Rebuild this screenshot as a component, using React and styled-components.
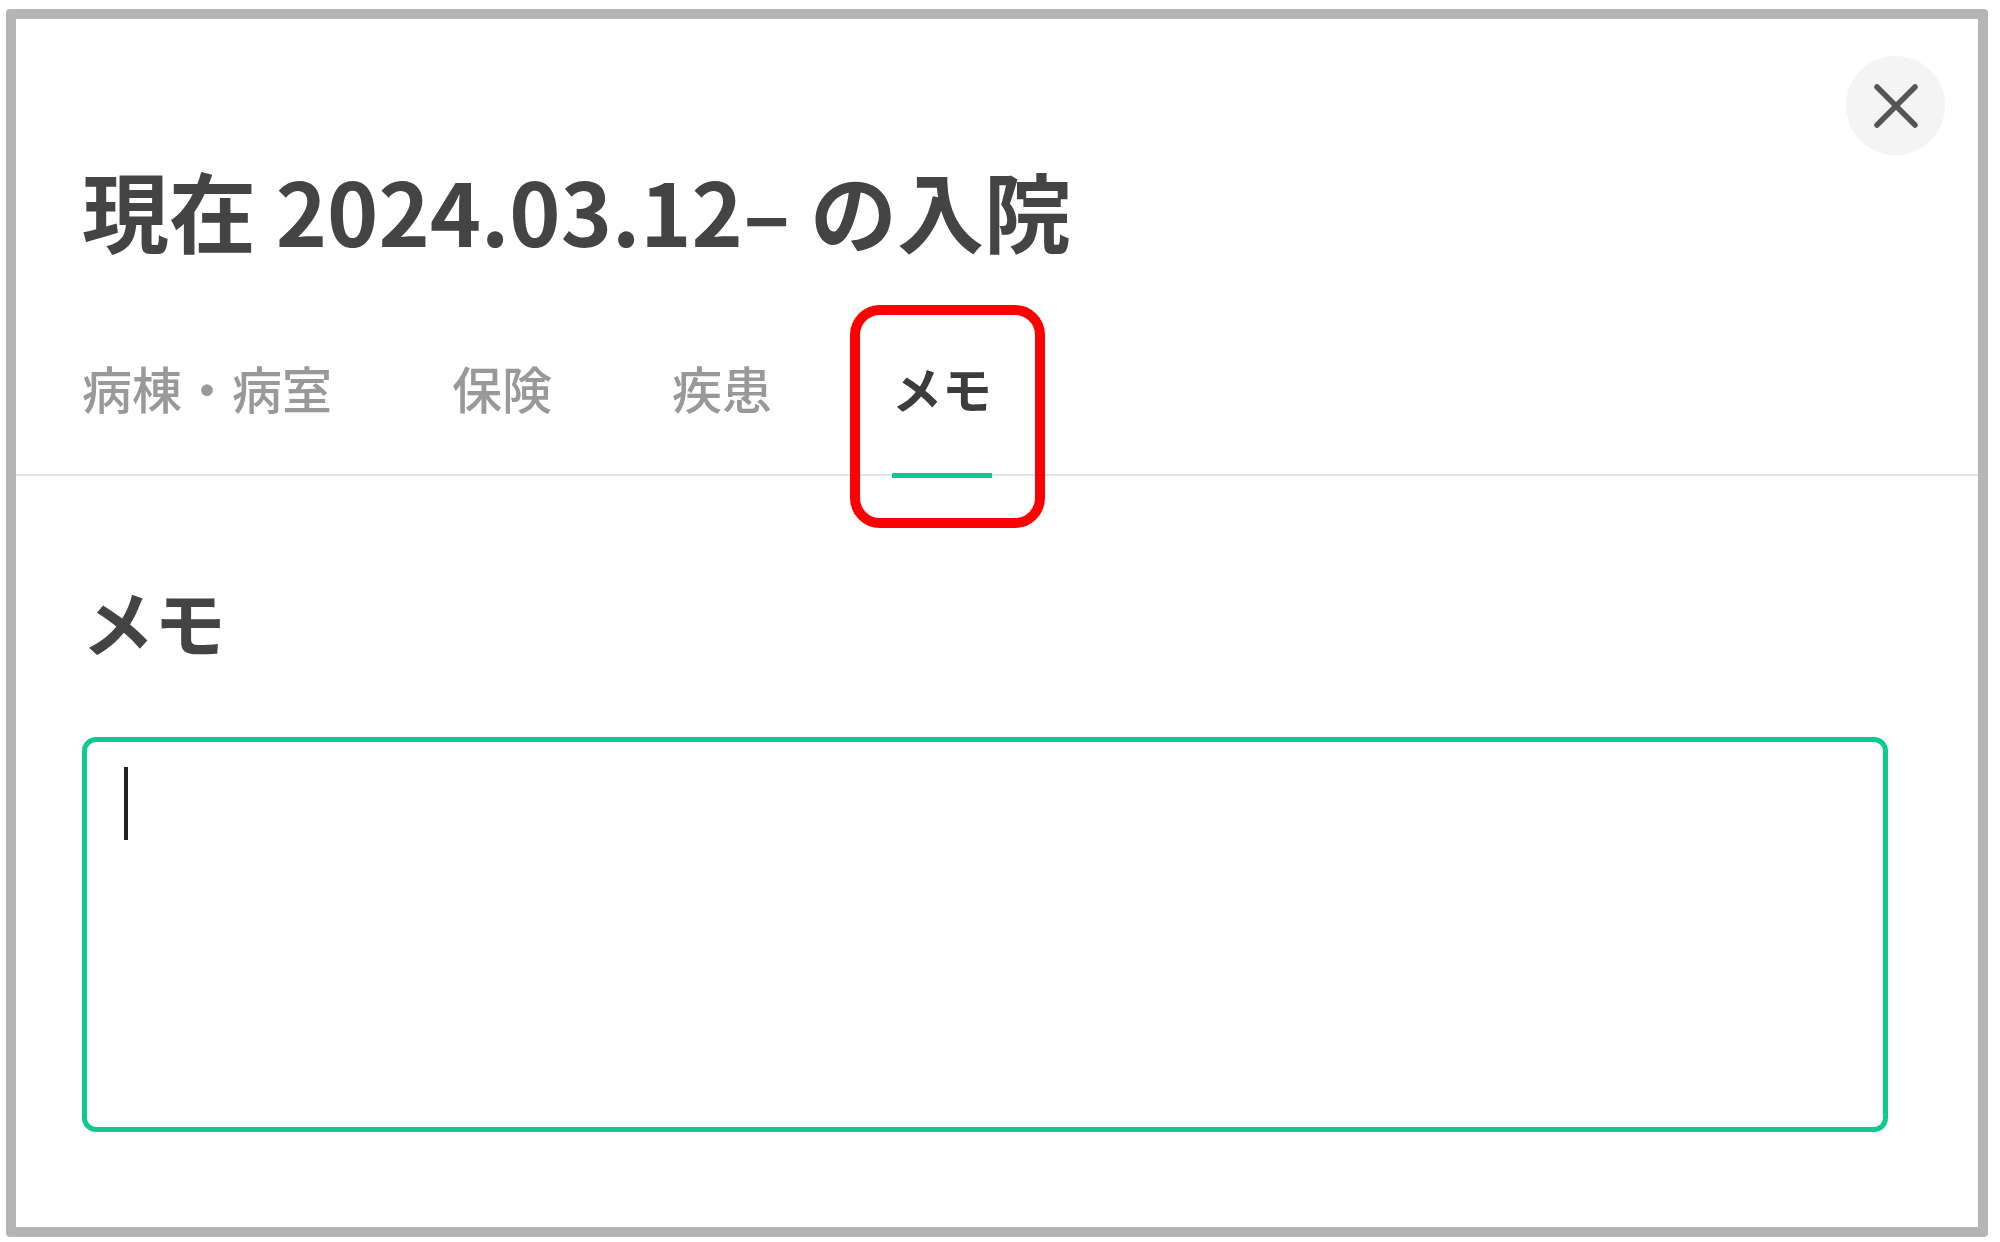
import React from 'react';
import styled, { createGlobalStyle } from 'styled-components';

const GlobalStyle = createGlobalStyle`
  html, body {
    margin: 0;
    padding: 0;
    background: #ffffff;
  }
  body {
    font-family: "Noto Sans CJK JP", "Noto Sans", sans-serif;
    color: #444;
  }
`;

const Frame = styled.div`
  box-sizing: border-box;
  width: 1982px;
  height: 1228px;
  margin: 9px 0 0 6px;
  border: 10px solid #b5b5b5;
  border-radius: 4px;
  background: #fff;
  position: relative;
  display: flex;
  flex-direction: column;
`;

const CloseButton = styled.button`
  position: absolute;
  top: 37px;
  right: 33px;
  width: 99px;
  height: 99px;
  border: none;
  border-radius: 50%;
  background: #f4f4f4;
  display: flex;
  align-items: center;
  justify-content: center;
  padding: 0;
  cursor: pointer;
`;

const Title = styled.h1`
  margin: 147px 0 0;
  padding: 0 66px;
  font-size: 87px;
  line-height: 1;
  font-weight: 700;
  color: #444;
  white-space: nowrap;
`;

const TabBar = styled.div`
  display: flex;
  gap: 120px;
  margin-top: 109px;
  padding: 0 66px;
  border-bottom: 2px solid #e4e4e4;
`;

const Tab = styled.div`
  position: relative;
  padding-bottom: 62px;
  font-size: 50px;
  line-height: 1;
  font-weight: ${(p) => (p.$active ? 600 : 500)};
  color: ${(p) => (p.$active ? '#3c3c3c' : '#999')};

  &::after {
    content: '';
    display: ${(p) => (p.$active ? 'block' : 'none')};
    position: absolute;
    left: 0;
    right: 0;
    bottom: -4px;
    height: 5px;
    background: #10c98f;
  }
`;

const Highlight = styled.span`
  position: absolute;
  left: -42px;
  top: -57px;
  width: 195px;
  height: 223px;
  box-sizing: border-box;
  border: 10px solid #ff0000;
  border-radius: 30px;
  pointer-events: none;
`;

const Body = styled.div`
  padding: 0 90px 0 66px;
`;

const SectionTitle = styled.h2`
  margin: 108px 0 0;
  font-size: 72px;
  line-height: 1;
  font-weight: 700;
  color: #444;
`;

const MemoField = styled.div`
  box-sizing: border-box;
  margin-top: 81px;
  height: 395px;
  padding: 25px 37px;
  border: 5px solid #10c98f;
  border-radius: 14px;
`;

const Caret = styled.span`
  display: block;
  width: 4px;
  height: 73px;
  background: #222;
`;

const tabs = ['病棟・病室', '保険', '疾患', 'メモ'];

export default function App() {
  return (
    <>
      <GlobalStyle />
      <Frame>
        <CloseButton aria-label="閉じる">
          <svg width="44" height="44" viewBox="0 0 44 44">
            <path
              d="M3 3 L41 41 M41 3 L3 41"
              stroke="#555"
              strokeWidth="5.5"
              strokeLinecap="round"
              fill="none"
            />
          </svg>
        </CloseButton>
        <Title>現在 2024.03.12– の入院</Title>
        <TabBar>
          {tabs.map((t) => (
            <Tab key={t} $active={t === 'メモ'}>
              {t}
              {t === 'メモ' && <Highlight />}
            </Tab>
          ))}
        </TabBar>
        <Body>
          <SectionTitle>メモ</SectionTitle>
          <MemoField>
            <Caret />
          </MemoField>
        </Body>
      </Frame>
    </>
  );
}
